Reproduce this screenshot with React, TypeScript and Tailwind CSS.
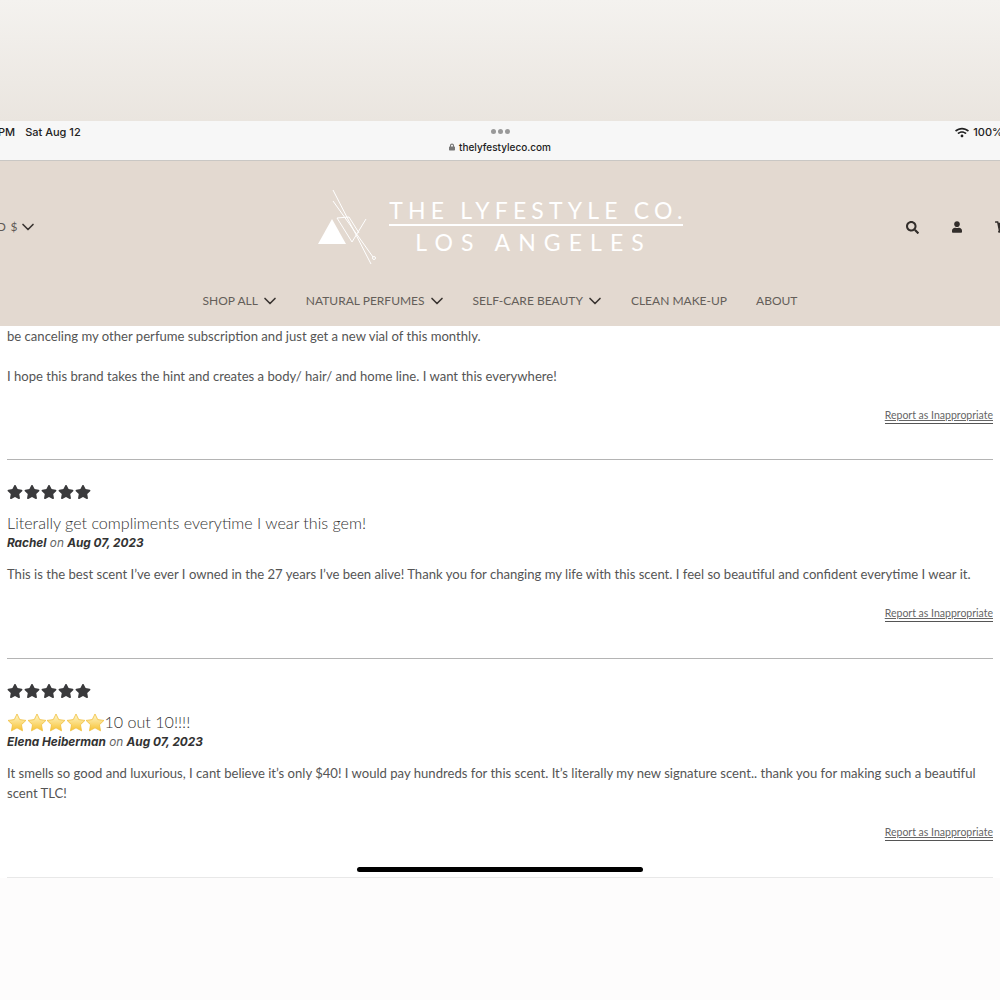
import React from 'react';
import { ChevronDown } from 'lucide-react';
import { FaLock, FaSearch, FaShoppingCart, FaStar, FaUser, FaWifi } from 'react-icons/fa';

const NAV = [
  { label: 'SHOP ALL', caret: true },
  { label: 'NATURAL PERFUMES', caret: true },
  { label: 'SELF-CARE BEAUTY', caret: true },
  { label: 'CLEAN MAKE-UP', caret: false },
  { label: 'ABOUT', caret: false },
];

const Logo: React.FC = () => (
  <div className="flex items-center shrink-0">
    <svg width="66" height="76" viewBox="316 188 66 76" className="mr-[6px]" fill="none" stroke="#fff" strokeWidth="1">
      <path d="M331 218 L345 243 L317 243 Z" fill="#fff" stroke="none" />
      <path d="M332 189 L370 263" />
      <path d="M332 200 L372 256" />
      <path d="M336 217 L348 216 L358 232" />
      <path d="M336 217 L351 241 L365 218" />
      <circle cx="373" cy="257" r="1.5" />
    </svg>
    <div className="flex flex-col text-white font-['Lato',sans-serif]">
      <div className="text-[23px] leading-[26px] whitespace-nowrap border-b-2 border-white pb-[1px]">
        <span className="block tracking-[0.225em] -mr-[5px]">THE LYFESTYLE CO.</span>
      </div>
      <div className="text-[23px] leading-[32px] tracking-[0.35em] pl-[26px] whitespace-nowrap">LOS ANGELES</div>
    </div>
  </div>
);

const GoldStar: React.FC = () => (
  <svg width="20" height="19" viewBox="0 0 24 23" className="shrink-0 -mr-[0.5px] -my-[1px]">
    <defs>
      <linearGradient id="gold" x1="0" y1="0" x2="0" y2="1">
        <stop offset="0" stopColor="#fff8cf" />
        <stop offset="1" stopColor="#f7c233" />
      </linearGradient>
    </defs>
    <path
      d="M12 1.2 L15.3 8 L22.8 9 L17.4 14.2 L18.7 21.6 L12 18 L5.3 21.6 L6.6 14.2 L1.2 9 L8.7 8 Z"
      fill="url(#gold)"
      stroke="#f0c040"
      strokeWidth="1"
      strokeLinejoin="round"
    />
  </svg>
);

const Stars: React.FC = () => (
  <div className="flex h-[18px] items-center gap-[1px] text-[#3a3a3c]">
    {[0, 1, 2, 3, 4].map((i) => (
      <FaStar key={i} className="w-[16px] h-[16px]" />
    ))}
  </div>
);

const ReportLink: React.FC = () => (
  <div className="flex justify-end">
    <a className="text-[10.5px] leading-[13px] text-[#666] underline border-b border-[#555] pb-[1px]">Report as Inappropriate</a>
  </div>
);

const Review: React.FC<{
  title: React.ReactNode;
  author: string;
  children: React.ReactNode;
}> = ({ title, author, children }) => (
  <div className="pt-[23px] border-t border-[#b4b4b4] pb-[36px]">
    <Stars />
    <div className="mt-[13px] flex items-center text-[16.1px] leading-[18px] font-light text-[#333]">{title}</div>
    <div className="mt-[2px] text-[11.8px] leading-[18px] text-[#333] italic font-['Inter',sans-serif]">
      <span className="font-bold">{author}</span> <span className="text-[#666] font-normal">on</span> <span className="font-bold">Aug 07, 2023</span>
    </div>
    <div className="mt-[12px] text-[13.1px] leading-[20px] text-[#555]">{children}</div>
    <div className="mt-[23px]">
      <ReportLink />
    </div>
  </div>
);

const App: React.FC = () => {
  return (
    <div className="relative w-[1000px] h-[1000px] overflow-hidden bg-white font-['Lato',sans-serif]">
      {/* photo margin above the tablet screen */}
      <div className="h-[121px] bg-gradient-to-b from-[#f4f2ef] to-[#eae5df]" />

      {/* status bar */}
      <div className="h-[40px] bg-[#f7f7f7] border-b border-[#c9c7c4] font-['Inter',sans-serif] text-[#222]">
        <div className="flex justify-between pt-[4px] text-[11px] leading-[14px] font-medium">
          <div className="flex -ml-[14px] gap-[10px]">
            <span>11 PM</span>
            <span className="whitespace-nowrap">Sat Aug 12</span>
          </div>
          <div className="flex items-center gap-[4px] -mr-[3px]">
            <FaWifi className="w-[14px] h-[11px]" />
            <span>100%</span>
          </div>
        </div>
        <div className="flex flex-col items-center -mt-[11px]">
          <div className="flex gap-[2px] h-[6px] items-center">
            <span className="w-[5px] h-[5px] rounded-full bg-[#999]" />
            <span className="w-[5px] h-[5px] rounded-full bg-[#999]" />
            <span className="w-[5px] h-[5px] rounded-full bg-[#999]" />
          </div>
          <div className="flex items-center gap-[4px] mt-[6px] text-[10px] leading-[14px] font-medium">
            <FaLock className="w-[6px] h-[8px] text-[#777]" />
            <span>thelyfestyleco.com</span>
          </div>
        </div>
      </div>

      {/* site header */}
      <header className="h-[165px] bg-[#e3d9d0]">
        <div className="h-[124px] flex items-center pt-[8px]">
          <div className="flex-1 basis-0 min-w-0 flex">
            <div className="flex items-center -ml-[20px] text-[12px] tracking-[0.06em] text-[#5f5955] whitespace-nowrap">
              <span>USD $</span>
              <ChevronDown className="w-[20px] h-[20px] text-[#3a3531]" strokeWidth={2} />
            </div>
          </div>
          <Logo />
          <div className="flex-1 basis-0 min-w-0 flex justify-end">
            <div className="flex items-center gap-[33px] -mr-[8px] text-[#332e2b]">
              <FaSearch className="w-[13px] h-[13px]" />
              <FaUser className="w-[10px] h-[12px]" />
              <FaShoppingCart className="w-[13px] h-[12px] shrink-0" />
            </div>
          </div>
        </div>
        <nav className="mt-[6px] flex justify-center gap-[29px] text-[12px] leading-[18px] text-[#645e59]">
          {NAV.map((item) => (
            <span key={item.label} className="flex items-center whitespace-nowrap">
              {item.label}
              {item.caret && <ChevronDown className="w-[20px] h-[20px] ml-[2px] -mr-[3px] text-[#3a3531]" strokeWidth={2} />}
            </span>
          ))}
        </nav>
      </header>

      {/* reviews */}
      <main className="px-[7px]">
        <div className="pb-[35px]">
          <div className="text-[13.1px] leading-[20px] text-[#555]">
            <p>be canceling my other perfume subscription and just get a new vial of this monthly.</p>
            <p className="mt-[20px]">I hope this brand takes the hint and creates a body/ hair/ and home line. I want this everywhere!</p>
          </div>
          <div className="mt-[23px]">
            <ReportLink />
          </div>
        </div>
        <Review title="Literally get compliments everytime I wear this gem!" author="Rachel">
          This is the best scent I’ve ever I owned in the 27 years I’ve been alive! Thank you for changing my life with this scent. I feel so beautiful and confident everytime I wear it.
        </Review>
        <Review
          title={
            <>
              <GoldStar />
              <GoldStar />
              <GoldStar />
              <GoldStar />
              <GoldStar />
              10 out 10!!!!
            </>
          }
          author="Elena Heiberman"
        >
          It smells so good and luxurious, I cant believe it’s only $40! I would pay hundreds for this scent. It’s literally my new signature scent.. thank you for making such a beautiful scent TLC!
        </Review>
        <div className="border-t border-[#e8e8e8]" />
      </main>

      {/* faint photo margin below the screen */}
      <div className="h-[123px] bg-[#fdfcfc]" />

      {/* home indicator */}
      <div className="absolute left-[357px] top-[867px] w-[286px] h-[5px] rounded-full bg-black" />
    </div>
  );
};

export default App;
